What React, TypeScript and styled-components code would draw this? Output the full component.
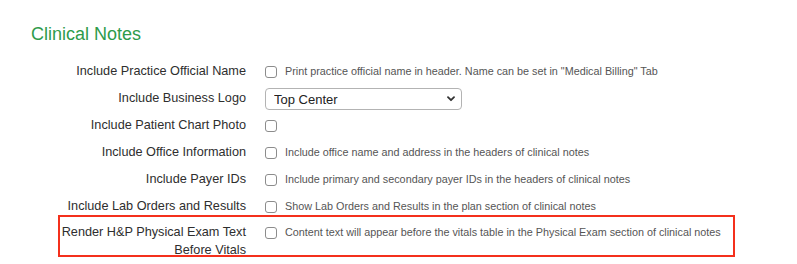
import React from 'react';
import styled, { createGlobalStyle } from 'styled-components';

const GlobalStyle = createGlobalStyle`
  html, body { margin: 0; padding: 0; background: #ffffff; }
  body { font-family: "Liberation Sans", Arial, Helvetica, sans-serif; }
`;

const Page = styled.div`
  width: 797px;
  height: 264px;
  overflow: hidden;
  box-sizing: border-box;
  padding: 24px 0 0 31px;
`;

const Title = styled.h2`
  margin: 0;
  font-size: 18px;
  font-weight: normal;
  line-height: 20px;
  color: #2e9b4b;
`;

const Form = styled.div`
  display: flex;
  flex-direction: column;
  margin-top: 13px;
`;

const Row = styled.div<{ $highlight?: boolean }>`
  position: relative;
  display: grid;
  grid-template-columns: 215px 1fr;
  column-gap: 19px;
  align-items: ${(p) => (p.$highlight ? 'start' : 'center')};
  min-height: 27px;
  padding-top: ${(p) => (p.$highlight ? '4px' : '0')};
  box-sizing: border-box;

  ${(p) =>
    p.$highlight &&
    `
    &::after {
      content: '';
      position: absolute;
      left: 27px;
      top: -4px;
      width: 677px;
      height: 42px;
      border: 2px solid #f4301c;
      box-sizing: border-box;
      pointer-events: none;
    }
  `}
`;

const Label = styled.div`
  text-align: right;
  font-size: 12.7px;
  line-height: 18px;
  color: #2e2e2e;
`;

const Control = styled.div`
  display: flex;
  align-items: center;
  gap: 8px;
  min-height: 18px;
`;

const Check = styled.input.attrs({ type: 'checkbox' })`
  appearance: none;
  -webkit-appearance: none;
  width: 12px;
  height: 12px;
  margin: 2px 0 0 0;
  border: 1px solid #8c8c8c;
  border-radius: 3px;
  background: #ffffff;
  box-sizing: border-box;
  flex: none;
`;

const Hint = styled.span`
  font-size: 10.8px;
  line-height: 18px;
  color: #555555;
  white-space: nowrap;
`;

const SelectWrap = styled.div`
  position: relative;
  width: 197px;
  height: 22px;
  margin-top: 3px;
`;

const Select = styled.select`
  appearance: none;
  -webkit-appearance: none;
  width: 100%;
  height: 100%;
  margin: 0;
  padding: 0 0 0 8px;
  border: 1px solid #b3b3b3;
  border-radius: 4px;
  background: #ffffff;
  font-family: "Liberation Sans", Arial, Helvetica, sans-serif;
  font-size: 13px;
  color: #222222;
  box-sizing: border-box;
`;

const Chevron = styled.svg`
  position: absolute;
  right: 7px;
  top: 8px;
  width: 8px;
  height: 6px;
  pointer-events: none;
`;

type Item = { label: string; hint?: string; kind: 'check' | 'select'; highlight?: boolean };

const items: Item[] = [
  {
    label: 'Include Practice Official Name',
    hint: 'Print practice official name in header. Name can be set in "Medical Billing" Tab',
    kind: 'check',
  },
  { label: 'Include Business Logo', kind: 'select' },
  { label: 'Include Patient Chart Photo', kind: 'check' },
  {
    label: 'Include Office Information',
    hint: 'Include office name and address in the headers of clinical notes',
    kind: 'check',
  },
  {
    label: 'Include Payer IDs',
    hint: 'Include primary and secondary payer IDs in the headers of clinical notes',
    kind: 'check',
  },
  {
    label: 'Include Lab Orders and Results',
    hint: 'Show Lab Orders and Results in the plan section of clinical notes',
    kind: 'check',
  },
  {
    label: 'Render H&P Physical Exam Text Before Vitals',
    hint: 'Content text will appear before the vitals table in the Physical Exam section of clinical notes',
    kind: 'check',
    highlight: true,
  },
];

export default function App() {
  return (
    <>
      <GlobalStyle />
      <Page>
        <Title>Clinical Notes</Title>
        <Form>
          {items.map((it) => (
            <Row key={it.label} $highlight={it.highlight}>
              <Label>{it.label}</Label>
              {it.kind === 'select' ? (
                <SelectWrap>
                  <Select defaultValue="Top Center">
                    <option>Top Center</option>
                    <option>Top Left</option>
                    <option>Top Right</option>
                  </Select>
                  <Chevron viewBox="0 0 8 6">
                    <path d="M1 1.2 L4 4.2 L7 1.2" fill="none" stroke="#333" strokeWidth="1.8" strokeLinecap="round" strokeLinejoin="round" />
                  </Chevron>
                </SelectWrap>
              ) : (
                <Control>
                  <Check />
                  {it.hint && <Hint>{it.hint}</Hint>}
                </Control>
              )}
            </Row>
          ))}
        </Form>
      </Page>
    </>
  );
}
